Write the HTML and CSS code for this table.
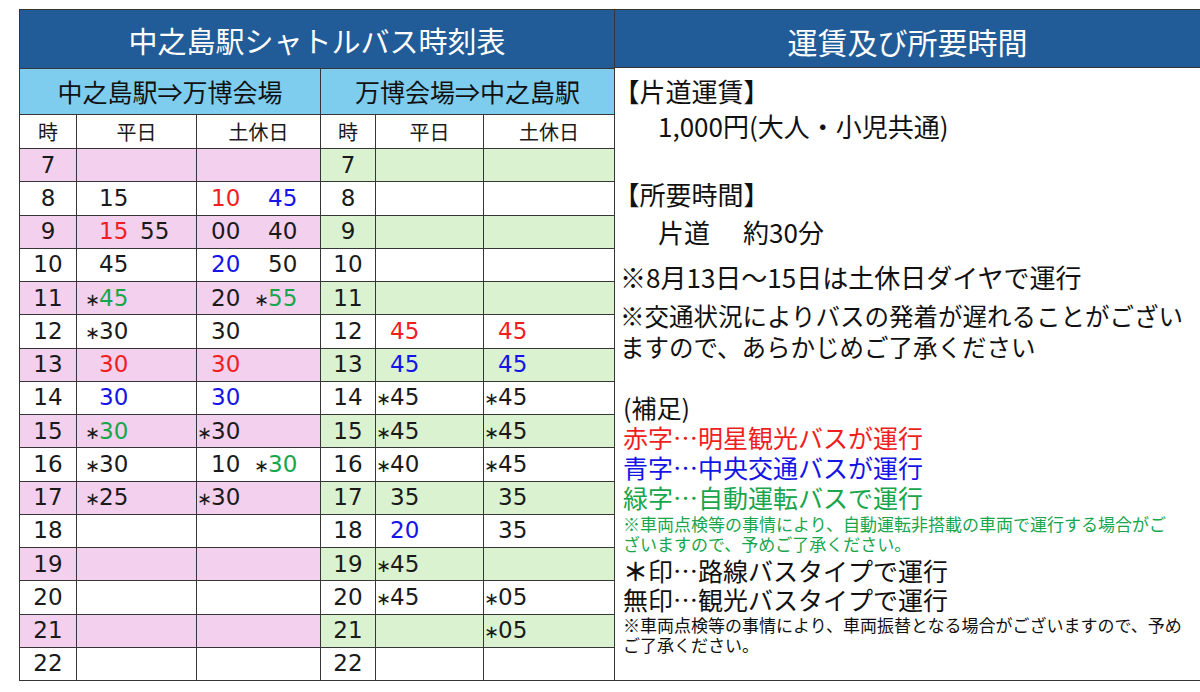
FILE: index.html
```html
<!DOCTYPE html>
<html lang="ja">
<head>
<meta charset="utf-8">
<title>中之島駅シャトルバス時刻表</title>
<link rel="stylesheet" href="styles.css">
</head>
<body>
<div class="sheet">
  <table class="tt">
    <colgroup>
      <col class="c-h1"><col class="c-wk1"><col class="c-we1">
      <col class="c-h2"><col class="c-wk2"><col class="c-we2">
    </colgroup>
    <tr class="r-title"><th colspan="6">中之島駅シャトルバス時刻表</th></tr>
    <tr class="r-sub"><th colspan="3">中之島駅⇒万博会場</th><th colspan="3">万博会場⇒中之島駅</th></tr>
    <tr class="r-cols"><th>時</th><th>平日</th><th>土休日</th><th>時</th><th>平日</th><th>土休日</th></tr>

    <tr class="odd"><td class="hr">7</td><td class="m wk"></td><td class="m we"></td><td class="hr">7</td><td class="m"></td><td class="m"></td></tr>
    <tr><td class="hr">8</td><td class="m wk"><span class="s"><i class="a"></i>15</span></td><td class="m we"><span class="s"><i class="a"></i><b class="red">10</b></span><span class="s"><i class="a"></i><b class="blue">45</b></span></td><td class="hr">8</td><td class="m"></td><td class="m"></td></tr>
    <tr class="odd"><td class="hr">9</td><td class="m wk"><span class="s"><i class="a"></i><b class="red">15</b></span><span class="s"><i class="a"></i>55</span></td><td class="m we"><span class="s"><i class="a"></i>00</span><span class="s"><i class="a"></i>40</span></td><td class="hr">9</td><td class="m"></td><td class="m"></td></tr>
    <tr><td class="hr">10</td><td class="m wk"><span class="s"><i class="a"></i>45</span></td><td class="m we"><span class="s"><i class="a"></i><b class="blue">20</b></span><span class="s"><i class="a"></i>50</span></td><td class="hr">10</td><td class="m"></td><td class="m"></td></tr>
    <tr class="odd"><td class="hr">11</td><td class="m wk"><span class="s"><i class="a">∗</i><b class="green">45</b></span></td><td class="m we"><span class="s"><i class="a"></i>20</span><span class="s"><i class="a">∗</i><b class="green">55</b></span></td><td class="hr">11</td><td class="m"></td><td class="m"></td></tr>
    <tr><td class="hr">12</td><td class="m wk"><span class="s"><i class="a">∗</i>30</span></td><td class="m we"><span class="s"><i class="a"></i>30</span></td><td class="hr">12</td><td class="m"><span class="s"><i class="a"></i><b class="red">45</b></span></td><td class="m"><span class="s"><i class="a"></i><b class="red">45</b></span></td></tr>
    <tr class="odd"><td class="hr">13</td><td class="m wk"><span class="s"><i class="a"></i><b class="red">30</b></span></td><td class="m we"><span class="s"><i class="a"></i><b class="red">30</b></span></td><td class="hr">13</td><td class="m"><span class="s"><i class="a"></i><b class="blue">45</b></span></td><td class="m"><span class="s"><i class="a"></i><b class="blue">45</b></span></td></tr>
    <tr><td class="hr">14</td><td class="m wk"><span class="s"><i class="a"></i><b class="blue">30</b></span></td><td class="m we"><span class="s"><i class="a"></i><b class="blue">30</b></span></td><td class="hr">14</td><td class="m"><span class="s"><i class="a">∗</i>45</span></td><td class="m"><span class="s"><i class="a">∗</i>45</span></td></tr>
    <tr class="odd"><td class="hr">15</td><td class="m wk"><span class="s"><i class="a">∗</i><b class="green">30</b></span></td><td class="m we"><span class="s"><i class="a">∗</i>30</span></td><td class="hr">15</td><td class="m"><span class="s"><i class="a">∗</i>45</span></td><td class="m"><span class="s"><i class="a">∗</i>45</span></td></tr>
    <tr><td class="hr">16</td><td class="m wk"><span class="s"><i class="a">∗</i>30</span></td><td class="m we"><span class="s"><i class="a"></i>10</span><span class="s"><i class="a">∗</i><b class="green">30</b></span></td><td class="hr">16</td><td class="m"><span class="s"><i class="a">∗</i>40</span></td><td class="m"><span class="s"><i class="a">∗</i>45</span></td></tr>
    <tr class="odd"><td class="hr">17</td><td class="m wk"><span class="s"><i class="a">∗</i>25</span></td><td class="m we"><span class="s"><i class="a">∗</i>30</span></td><td class="hr">17</td><td class="m"><span class="s"><i class="a"></i>35</span></td><td class="m"><span class="s"><i class="a"></i>35</span></td></tr>
    <tr><td class="hr">18</td><td class="m wk"></td><td class="m we"></td><td class="hr">18</td><td class="m"><span class="s"><i class="a"></i><b class="blue">20</b></span></td><td class="m"><span class="s"><i class="a"></i>35</span></td></tr>
    <tr class="odd"><td class="hr">19</td><td class="m wk"></td><td class="m we"></td><td class="hr">19</td><td class="m"><span class="s"><i class="a">∗</i>45</span></td><td class="m"></td></tr>
    <tr><td class="hr">20</td><td class="m wk"></td><td class="m we"></td><td class="hr">20</td><td class="m"><span class="s"><i class="a">∗</i>45</span></td><td class="m"><span class="s"><i class="a">∗</i>05</span></td></tr>
    <tr class="odd"><td class="hr">21</td><td class="m wk"></td><td class="m we"></td><td class="hr">21</td><td class="m"></td><td class="m"><span class="s"><i class="a">∗</i>05</span></td></tr>
    <tr><td class="hr">22</td><td class="m wk"></td><td class="m we"></td><td class="hr">22</td><td class="m"></td><td class="m"></td></tr>
  </table>

  <section class="info">
    <div class="info-head">運賃及び所要時間</div>
    <div class="info-body">
      <div class="blk fare">
        <p class="lbl">【片道運賃】</p>
        <p class="ind">1,000円(大人・小児共通)</p>
      </div>
      <div class="blk time">
        <p class="lbl">【所要時間】</p>
        <p class="ind dur">片道<span class="gap"></span>約30分</p>
      </div>
      <p class="note n1">※8月13日～15日は土休日ダイヤで運行</p>
      <p class="note n2">※交通状況によりバスの発着が遅れることがござい<br>ますので、あらかじめご了承ください</p>
      <div class="legend">
        <p>(補足)</p>
        <p class="red">赤字…明星観光バスが運行</p>
        <p class="blue">青字…中央交通バスが運行</p>
        <p class="green">緑字…自動運転バスで運行</p>
        <p class="small green gn">※車両点検等の事情により、自動運転非搭載の車両で運行する場合がご<br>ざいますので、予めご了承ください。</p>
        <p class="type"><span class="star">＊</span>印…路線バスタイプで運行</p>
        <p class="type">無印…観光バスタイプで運行</p>
        <p class="small bk">※車両点検等の事情により、車両振替となる場合がございますので、予め<br>ご了承ください。</p>
      </div>
    </div>
  </section>
</div>
</body>
</html>
```

FILE: styles.css
```css
* { box-sizing: border-box; }
html, body { margin: 0; padding: 0; background: #fff; }
body {
  width: 1200px;
  height: 692px;
  overflow: hidden;
  font-family: "Noto Sans CJK JP", "Noto Sans", sans-serif;
  color: #1a1a1a;
}
p { margin: 0; white-space: nowrap; }

.sheet {
  display: flex;
  align-items: flex-start;
  margin: 9px 0 0 19px;
  width: 1181px;
}

/* ---------- timetable ---------- */
.tt {
  border-collapse: collapse;
  table-layout: fixed;
  width: 595px;
  flex: none;
}
.tt th, .tt td {
  border: 1px solid #363636;
  padding: 0;
  vertical-align: middle;
  font-weight: 400;
}
.c-h1 { width: 57px; }
.c-wk1 { width: 120px; }
.c-we1 { width: 124px; }
.c-h2 { width: 55px; }
.c-wk2 { width: 108px; }
.c-we2 { width: 131px; }

.r-title th {
  height: 59px;
  background: #215c98;
  color: #fff;
  font-size: 29px;
  line-height: 1;
  padding-top: 2px;
}
.r-sub th {
  height: 46px;
  background: #7eccee;
  color: #111;
  font-size: 25px;
  line-height: 1;
}
.r-cols th {
  height: 34px;
  background: #fff;
  font-size: 20px;
  line-height: 1;
}
.tt td {
  height: 33.25px;
  font-family: "DejaVu Sans", "Noto Sans", sans-serif;
  font-size: 23px;
  line-height: 1;
  white-space: nowrap;
  color: #1a1a1a;
}
.tt tr.odd td:nth-child(-n+3) { background: #f3d0ee; }
.tt tr.odd td:nth-child(n+4) { background: #daf2d0; }

.hr { text-align: center; padding-top: 2px; }
.m { padding-left: 9px; padding-top: 2px; }
.m.wk { padding-left: 8px; }

.s {
  display: inline-block;
  width: 57px;
}
.wk .s { width: 41px; }
.a {
  display: inline-block;
  width: 14px;
  font-style: normal;
  font-size: 18px;
}
b { font-weight: 400; }

.red { color: #f01e1e; }
.blue { color: #1414e6; }
.green { color: #17a64c; }

/* ---------- info panel ---------- */
.info {
  flex: 1 1 auto;
  min-width: 0;
  height: 672px;
  border-top: 1px solid #363636;
  border-bottom: 1px solid #363636;
}
.info-head {
  height: 58px;
  background: #215c98;
  color: #fff;
  font-size: 30px;
  display: flex;
  align-items: center;
  justify-content: center;
  padding: 4px 0 0 0;
  border-bottom: 1px solid #363636;
}
.info-body {
  padding: 5px 0 0 5px;
  font-size: 26px;
  color: #111;
}
.lbl { line-height: 35px; text-indent: -0.25em; }
.ind { padding-left: 38px; line-height: 35px; }
.time { margin-top: 33px; }
.dur { line-height: 38px; margin-top: 2px; }
.gap { display: inline-block; width: 33px; }
.note { line-height: 32px; }
.n1 { margin-top: 10px; }
.n2 { margin-top: 7px; line-height: 31px; font-size: 24.5px; }

.legend { margin-top: 30px; font-size: 25px; padding-left: 3px; }
.legend p { line-height: 30px; }
.legend .small { font-size: 17px; line-height: 20px; }
.legend .gn { margin-top: 2px; margin-bottom: 2px; }
.legend .type { line-height: 29px; }
.legend .bk { margin-top: 1px; }
.star { font-weight: 700; }
```
